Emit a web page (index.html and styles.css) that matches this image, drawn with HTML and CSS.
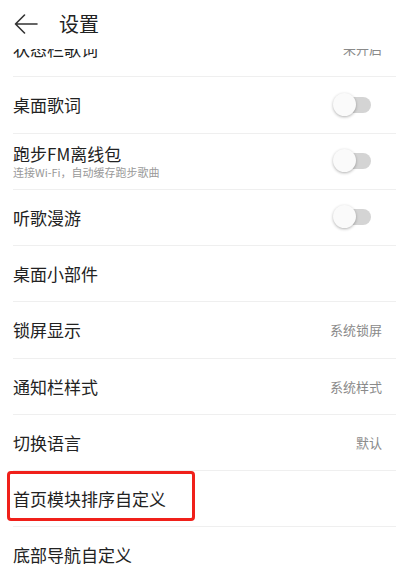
FILE: index.html
```html
<!DOCTYPE html>
<html lang="zh-CN">
<head>
<meta charset="utf-8">
<link rel="stylesheet" href="styles.css">
</head>
<body>
<div class="page">
  <header class="header">
    <svg class="back" width="24" height="20" viewBox="0 0 24 20">
      <path d="M10.5 1 L1.5 10 L10.5 19 M1.5 10 H23" fill="none" stroke="#333" stroke-width="1.6" stroke-linecap="round" stroke-linejoin="round"/>
    </svg>
    <h1 class="title">设置</h1>
  </header>
  <div class="viewport">
    <div class="list">
      <div class="row"><span class="label">状态栏歌词</span><span class="value">未开启</span></div>
      <div class="row"><span class="label">桌面歌词</span><span class="toggle"><span class="knob"></span></span></div>
      <div class="row"><div class="stack"><span class="label">跑步FM离线包</span><span class="sub">连接Wi-Fi，自动缓存跑步歌曲</span></div><span class="toggle"><span class="knob"></span></span></div>
      <div class="row"><span class="label">听歌漫游</span><span class="toggle"><span class="knob"></span></span></div>
      <div class="row"><span class="label">桌面小部件</span></div>
      <div class="row"><span class="label">锁屏显示</span><span class="value">系统锁屏</span></div>
      <div class="row"><span class="label">通知栏样式</span><span class="value">系统样式</span></div>
      <div class="row"><span class="label">切换语言</span><span class="value">默认</span></div>
      <div class="row marked"><span class="label">首页模块排序自定义</span><span class="highlight"></span></div>
      <div class="row"><span class="label">底部导航自定义</span></div>
    </div>
  </div>
</div>
</body>
</html>
```
FILE: styles.css
```css
html, body {
  margin: 0;
  padding: 0;
  background: #fff;
}
body {
  font-family: "Noto Sans CJK SC", "Noto Sans", sans-serif;
  color: #222;
}
.page {
  width: 396px;
  height: 576px;
  overflow: hidden;
  display: flex;
  flex-direction: column;
}
.header {
  height: 49px;
  flex: none;
  display: flex;
  align-items: center;
  padding-left: 14px;
  box-sizing: border-box;
  background: #fff;
}
.back {
  display: block;
  margin-top: -1px;
}
.title {
  margin: 0 0 0 21px;
  font-size: 20px;
  font-weight: 400;
  line-height: 1;
  color: #222;
  margin-top: -1px;
}
.viewport {
  flex: 1;
  overflow: hidden;
}
.list {
  margin-top: -28px;
}
.row {
  position: relative;
  height: 56.25px;
  box-sizing: border-box;
  margin-left: 13px;
  padding-right: 14px;
  border-bottom: 1px solid #efefef;
  display: flex;
  align-items: center;
  justify-content: space-between;
}
.label {
  font-size: 17px;
  line-height: 1;
  color: #222;
}
.stack {
  display: flex;
  flex-direction: column;
  gap: 5px;
  margin-top: 1px;
}
.sub {
  font-size: 11px;
  line-height: 1;
  color: #999;
}
.value {
  font-size: 13px;
  color: #8a8a8a;
  line-height: 1;
}
.toggle {
  position: relative;
  width: 31px;
  height: 16px;
  border-radius: 8px;
  background: #d4d4d4;
  margin-right: 11px;
}
.knob {
  position: absolute;
  left: -7px;
  top: -4px;
  width: 23px;
  height: 23px;
  border-radius: 50%;
  background: #fafafa;
  box-shadow: 0 1px 3px rgba(0,0,0,0.3);
}
.highlight {
  position: absolute;
  left: -6px;
  top: 0;
  width: 188px;
  height: 50px;
  box-sizing: border-box;
  border: 3px solid #f0201a;
  border-radius: 4px;
}
```
